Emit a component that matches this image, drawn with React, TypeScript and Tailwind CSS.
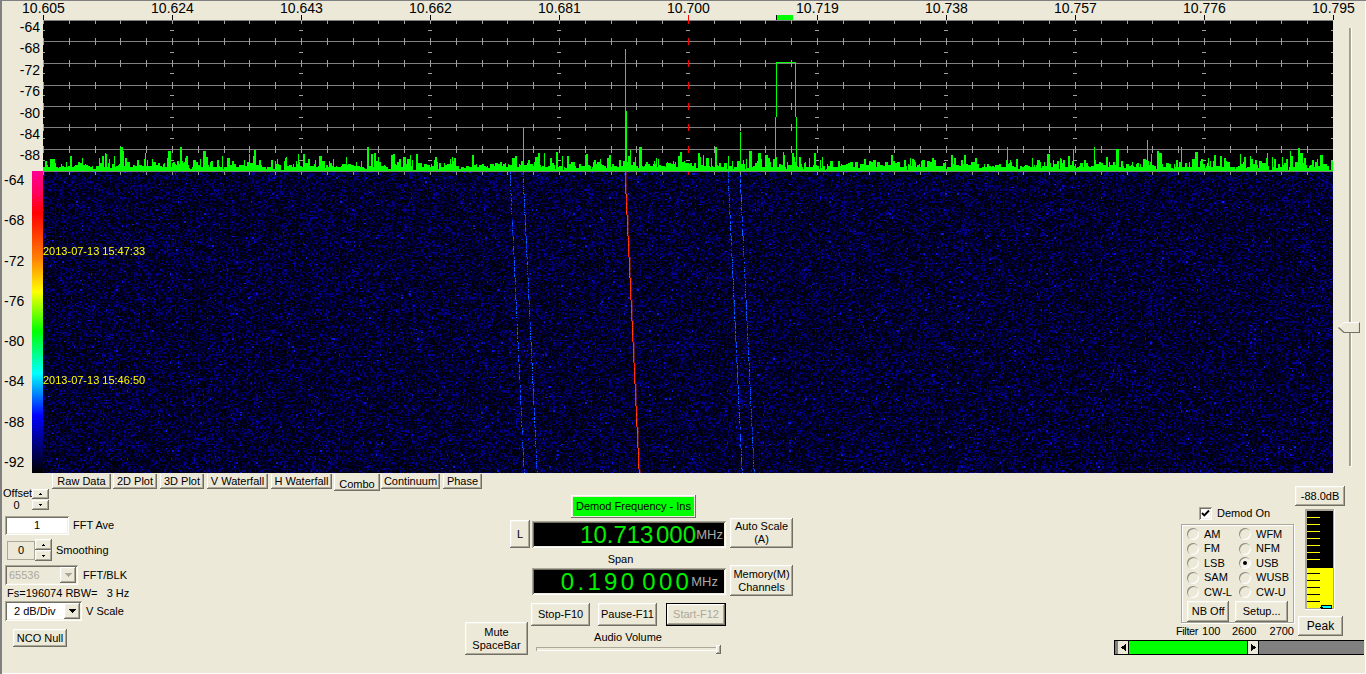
import React, { useEffect, useRef } from "react";

const RAISED =
  "bg-[#ece9d8] shadow-[inset_-1px_-1px_0_#716f64,inset_1px_1px_0_#ffffff,inset_-2px_-2px_0_#aca899,inset_2px_2px_0_#f1efe2]";
const SUNKEN =
  "shadow-[inset_1px_1px_0_#aca899,inset_-1px_-1px_0_#ffffff,inset_2px_2px_0_#716f64,inset_-2px_-2px_0_#f1efe2]";

function rng(seed: number) {
  let a = seed;
  return () => {
    a |= 0;
    a = (a + 0x6d2b79f5) | 0;
    let t = Math.imul(a ^ (a >>> 15), 1 | a);
    t = (t + Math.imul(t ^ (t >>> 7), 61 | t)) ^ t;
    return ((t ^ (t >>> 14)) >>> 0) / 4294967296;
  };
}

const PW = 1290;
const PH = 152;
const base = 151;

function spectrumPath() {
  const r = rng(4242);
  let d = "";
  let x = 0;
  while (x < PW) {
    const w = r() < 0.45 ? 1 : r() < 0.75 ? 2 : 3;
    let h = 3.5 - Math.log(r() + 0.001) * 5.2;
    if (r() < 0.1) h = 1 + r() * 3;
    h = Math.round(Math.min(24, h));
    d += `M${x} ${base - h}h${w}V${base}h-${w}z`;
    x += w;
  }
  return d;
}
const SPECTRUM = spectrumPath();
const vXs = Array.from({ length: 51 }, (_, i) => Math.round(i * 25.8));
const hYs = [21, 43, 65, 86, 107, 129];
const dashYs = [10, 32, 53, 75, 97, 118, 140];

function Spectrum() {
  return (
    <svg width={PW} height={PH} viewBox={`0 0 ${PW} ${PH}`} shapeRendering="crispEdges" className="block bg-black">
      <rect x="0" y="0" width={PW} height="1" fill="#808080" />
      {hYs.map((y) => (
        <rect key={y} x="0" y={y} width={PW} height="1" fill="#808080" />
      ))}
      {vXs.map((x) => (
        <g key={x}>
          <rect x={x} y="0" width="1" height="4" fill={x === 645 ? "#ff0000" : "#a0a0a0"} />
          {hYs.map((y) => (
            <rect key={y} x={x} y={y - 3} width="1" height="7" fill={x === 645 ? "#ff0000" : "#a0a0a0"} />
          ))}
        </g>
      ))}
      {vXs
        .filter((_, i) => i % 5 === 0)
        .map((x) =>
          dashYs.map((y) => <rect key={`${x}-${y}`} x={x - 2} y={y} width="4" height="1" fill="#a0a0a0" />)
        )}
      <path d={SPECTRUM} fill="#00ff00" />
      <g fill="#00ff00">
        <rect x="480" y="107" width="1" height="44" />
        <rect x="582" y="29" width="1" height="122" />
        <rect x="582" y="91" width="2" height="60" />
        <rect x="697" y="112" width="1" height="39" />
        <rect x="1104" y="120" width="1" height="31" />
        <rect x="732" y="97" width="1" height="54" />
        <rect x="733" y="42" width="1" height="55" />
        <rect x="733" y="42" width="20" height="1" />
        <rect x="752" y="42" width="1" height="55" />
        <rect x="753" y="97" width="1" height="54" />
      </g>
      <rect x="0" y="151" width={PW} height="1" fill="#808080" />
    </svg>
  );
}

const BLUE = ["#0a40f0", "#0070ff", "#0030c0"];
const RED = ["#ff3000", "#ff2000", "#ff5000"];
const traces = [
  { x0: 466.5, c: BLUE, dotted: true },
  { x0: 479.5, c: BLUE, dotted: true },
  { x0: 582.4, c: RED, dotted: false },
  { x0: 684.5, c: BLUE, dotted: true },
  { x0: 696.5, c: BLUE, dotted: true },
];

function Waterfall() {
  const ref = useRef<HTMLCanvasElement>(null);
  useEffect(() => {
    const cv = ref.current;
    if (!cv) return;
    const ctx = cv.getContext("2d");
    if (!ctx) return;
    const W = cv.width;
    const H = cv.height;
    const sw = 968;
    const sh = 226;
    const off = document.createElement("canvas");
    off.width = sw;
    off.height = sh;
    const octx = off.getContext("2d");
    if (!octx) return;
    const img = octx.createImageData(sw, sh);
    const r = rng(99);
    for (let i = 0; i < sw * sh; i++) {
      const v = r();
      let R = 0;
      let G = 0;
      let B = 0;
      if (v < 0.4) {
        B = Math.floor(r() * 30);
      } else if (v < 0.992) {
        const k = r();
        B = 35 + Math.floor(125 * k * k);
        R = Math.floor(B * 0.04);
      } else {
        B = 180 + Math.floor(r() * 60);
        R = 8;
        G = 8 + Math.floor(r() * 30);
      }
      img.data[i * 4] = R;
      img.data[i * 4 + 1] = G;
      img.data[i * 4 + 2] = B;
      img.data[i * 4 + 3] = 255;
    }
    octx.putImageData(img, 0, 0);
    ctx.imageSmoothingEnabled = false;
    ctx.drawImage(off, 0, 0, W, H);
    traces.forEach((t) => {
      for (let y = 0; y < H; y++) {
        const x = Math.round(t.x0 + Math.floor(y / 21.2));
        if (t.dotted && r() < 0.25) continue;
        ctx.fillStyle = t.c[Math.floor(r() * 3)];
        ctx.fillRect(x, y, 1, 1);
        if (!t.dotted) {
          ctx.globalAlpha = 0.35;
          ctx.fillRect(x + 1, y, 1, 1);
          ctx.globalAlpha = 1;
        }
      }
    });
    vXs.forEach((x) => {
      ctx.fillStyle = x === 645 ? "#ff0000" : "#909090";
      ctx.fillRect(x, 0, 1, 3);
    });
  }, []);
  return <canvas ref={ref} width={PW} height={301} className="block w-[1290px] h-[301px]" />;
}

function Btn({ children, className = "" }: { children: React.ReactNode; className?: string }) {
  return (
    <div className={`${RAISED} flex items-center justify-center text-center leading-[13px] ${className}`}>{children}</div>
  );
}

function Tri({ up = false, color = "#000", w = 5 }: { up?: boolean; color?: string; w?: number }) {
  const h = Math.ceil(w / 2);
  return (
    <svg width={w} height={h} viewBox={`0 0 ${w} ${h}`} shapeRendering="crispEdges">
      <path d={up ? `M${w / 2} 0L${w} ${h}H0z` : `M0 0H${w}L${w / 2} ${h}z`} fill={color} />
    </svg>
  );
}

function Spin({ top, bottom, w }: { top: string; bottom: string; w: string }) {
  return (
    <div className={`flex flex-col ${w}`}>
      <Btn className={top}>
        <Tri up w={3} />
      </Btn>
      <Btn className={bottom}>
        <Tri w={3} />
      </Btn>
    </div>
  );
}

const tabs = [
  { t: "Raw Data", c: "w-[59px] ml-[52px] h-[15px]" },
  { t: "2D Plot", c: "w-[44px] ml-[2px] h-[15px]" },
  { t: "3D Plot", c: "w-[44px] ml-[3px] h-[15px]" },
  { t: "V Waterfall", c: "w-[61px] ml-[3px] h-[15px]" },
  { t: "H Waterfall", c: "w-[61px] ml-[3px] h-[15px]" },
  { t: "Combo", c: "w-[46px] ml-[2px] h-[17px] pt-[3px]" },
  { t: "Continuum", c: "w-[59px] ml-[1px] h-[15px]" },
  { t: "Phase", c: "w-[39px] ml-[3px] h-[15px]" },
];

const xLabels = ["10.605", "10.624", "10.643", "10.662", "10.681", "10.700", "10.719", "10.738", "10.757", "10.776", "10.795"];
const topDb = ["-64", "-68", "-72", "-76", "-80", "-84", "-88"];
const wfDb = ["-64", "-68", "-72", "-76", "-80", "-84", "-88", "-92"];

const modes = [
  ["AM", "WFM"],
  ["FM", "NFM"],
  ["LSB", "USB"],
  ["SAM", "WUSB"],
  ["CW-L", "CW-U"],
];

function Radio({ label, on }: { label: string; on?: boolean }) {
  return (
    <div className="flex items-center h-[14.5px]">
      <div
        className={`w-[12px] h-[12px] rounded-full bg-[#ece9d8] flex items-center justify-center shadow-[inset_1px_1px_0_#8f8d7f,inset_-1px_-1px_0_#ffffff] ${
          on ? "bg-[#f4f2e8]" : ""
        }`}
      >
        {on && <div className="w-[4px] h-[4px] rounded-full bg-black" />}
      </div>
      <span className="ml-[5px]">{label}</span>
    </div>
  );
}

function Meter() {
  const yellow = [8, 15, 22, 29, 36, 43, 50];
  const black = [64, 71, 78, 85, 92];
  return (
    <svg width="30" height="101" viewBox="0 0 30 101" shapeRendering="crispEdges" className="block">
      <rect width="30" height="101" fill="#ffffff" />
      <rect x="0" y="0" width="29" height="100" fill="#aca899" />
      <rect x="2" y="2" width="26" height="97" fill="#000000" />
      <rect x="2" y="59" width="26" height="40" fill="#ffff00" />
      {yellow.map((y) => (
        <rect key={y} x="2" y={y} width="13" height="1" fill="#ffff00" />
      ))}
      {black.map((y) => (
        <rect key={y} x="2" y={y} width="13" height="1" fill="#000000" />
      ))}
      <rect x="16" y="96" width="10" height="3" fill="#00ffff" stroke="#000" strokeWidth="1" />
      <path d="M15 98h3v1h-3z" fill="#000" />
    </svg>
  );
}

export default function App() {
  return (
    <div className="w-[1366px] h-[674px] bg-[#ece9d8] overflow-hidden relative text-[11px] leading-[13px] text-black font-['Liberation_Sans',Arial,sans-serif] shadow-[inset_2px_1px_0_#808080,inset_-1px_-1px_0_#ffffff]">
      {/* top: plots and right slider */}
      <div className="flex h-[473px]">
        <div className="w-[1333px] flex flex-col shrink-0">
          <div className="h-[20px] relative">
            <div className="w-[1419px] -ml-[21px] grid grid-cols-[repeat(11,129px)] text-[14px] leading-[15px] h-[20px]">
              {xLabels.map((l) => (
                <div key={l} className="flex flex-col items-center w-[129px]">
                  <span className="mt-[1px] h-[14px]">{l}</span>
                  <span className={`w-px h-[5px] ${l === "10.700" ? "bg-[#ff0000]" : "bg-black"}`} />
                </div>
              ))}
            </div>
            <div className="absolute left-[776px] top-[15px] w-[17px] h-[5px] bg-[#00ff00] border-l border-black" />
          </div>
          <div className="flex h-[152px]">
            <div className="w-[43px] shrink-0 flex flex-col items-end pr-[3px] -mt-[3px] text-[14px] leading-[21.4px]">
              {topDb.map((d) => (
                <span key={d} className="h-[21.4px] shrink-0">
                  {d}
                </span>
              ))}
            </div>
            <Spectrum />
          </div>
          <div className="flex h-[301px]">
            <div className="w-[32px] shrink-0 flex flex-col items-start pl-[4px] -mt-[2px] text-[14px] leading-[20px]">
              {wfDb.map((d) => (
                <span key={d} className="h-[40.3px] shrink-0 flex items-start">
                  {d}
                </span>
              ))}
            </div>
            <div className="w-[11px] h-[302px] -mt-[1px] shrink-0 bg-[linear-gradient(to_bottom,#ff0090_0%,#ff0060_7%,#ff0000_14%,#ff8000_29%,#ffff00_40%,#00ff00_53%,#00ffff_67%,#0000ff_81%,#000000_100%)]" />
            <div className="relative w-[1290px] h-[301px]">
              <Waterfall />
              <span className="absolute left-0 top-[73px] text-[#ffff00]">2013-07-13 15:47:33</span>
              <span className="absolute left-0 top-[202px] text-[#ffff00]">2013-07-13 15:46:50</span>
            </div>
          </div>
        </div>
        <div className="relative flex-1">
          <div className="absolute left-[16px] top-[28px] w-[2px] h-[438px] border-l border-[#9d9b8c] bg-[#aca899] shadow-[1px_0_0_#ffffff,1px_1px_0_#ffffff]" />
          <svg className="absolute left-[5px] top-[322px]" width="22" height="11" viewBox="0 0 22 11" shapeRendering="geometricPrecision">
            <path d="M0.5 5.5L6 0.5H21.5V10.5H6z" fill="#ece9d8" stroke="#ffffff" strokeWidth="1" />
            <path d="M21.5 0.5V10.5H6L0.5 5.5" fill="none" stroke="#716f64" strokeWidth="1.2" />
          </svg>
        </div>
      </div>

      {/* tabs */}
      <div className="flex items-start h-[16px] pt-[1px]">
        {tabs.map((t) => (
          <div
            key={t.t}
            className={`flex items-center justify-center shrink-0 bg-[#ece9d8] shadow-[inset_-1px_-1px_0_#716f64,inset_1px_0_0_#ffffff,inset_-2px_-2px_0_#aca899] ${t.c}`}
          >
            {t.t}
          </div>
        ))}
      </div>

      {/* controls */}
      <div className="flex h-[185px]">
        {/* left column */}
        <div className="w-[465px] shrink-0 flex flex-col">
          <div className="flex -mt-[3px] h-[24px] relative">
            <div className="ml-[3px] w-[27px] text-center flex flex-col pt-0">
              <span className="h-[14px] leading-[13px] mt-[1px]">Offset</span>
              <span className="leading-[12px] mt-[-1px]">0</span>
            </div>
            <div className="ml-[2px] mt-[3px]">
              <Spin w="w-[17px]" top="h-[10px] mb-[1px]" bottom="h-[10px]" />
            </div>
          </div>
          <div className="flex items-center mt-[6px] ml-[5px] h-[19px]">
            <div className={`w-[64px] h-[19px] bg-white flex items-center justify-center ${SUNKEN}`}>1</div>
            <span className="ml-[4px]">FFT Ave</span>
          </div>
          <div className="flex items-center mt-[4px] ml-[7px] h-[22px]">
            <div className="w-[28px] h-[19px] border border-[#aca899] flex items-center justify-center">0</div>
            <Spin w="w-[17px]" top="h-[11px]" bottom="h-[11px]" />
            <span className="ml-[4px]">Smoothing</span>
          </div>
          <div className="flex items-center mt-[4px] ml-[5px] h-[20px]">
            <div className={`w-[73px] h-[20px] flex items-center justify-between pl-[4px] pr-[2px] text-[#aca899] ${SUNKEN}`}>
              <span>65536</span>
              <Btn className="w-[16px] h-[16px]">
                <Tri color="#aca899" w={7} />
              </Btn>
            </div>
            <span className="ml-[5px]">FFT/BLK</span>
          </div>
          <div className="mt-[2px] ml-[7px] h-[13px] whitespace-pre">Fs=196074 RBW=   3 Hz</div>
          <div className="flex items-center mt-[1px] ml-[5px] h-[20px]">
            <div className={`w-[77px] h-[20px] bg-white flex items-center justify-between pl-[9px] pr-[2px] ${SUNKEN}`}>
              <span>2 dB/Div</span>
              <Btn className="w-[16px] h-[16px]">
                <Tri w={7} />
              </Btn>
            </div>
            <span className="ml-[4px]">V Scale</span>
          </div>
          <Btn className="mt-[8px] ml-[13px] w-[54px] h-[18px]">NCO Null</Btn>
        </div>

        {/* centre column */}
        <div className="w-[329px] shrink-0 flex flex-col pt-[6px]">
          <div className="ml-[106px] w-[125px] h-[23px] bg-[#00ff00] flex items-center justify-center shadow-[inset_-1px_-1px_0_#716f64,inset_1px_1px_0_#ffffff,inset_-2px_-2px_0_#ece9d8,inset_2px_2px_0_#ece9d8]">
            Demod Frequency - Ins
          </div>
          <div className="flex items-start h-[30px]">
            <Btn className="ml-[45px] w-[20px] h-[28px] mt-[2px]">L</Btn>
            <div className={`ml-[2px] mt-[3px] w-[194px] h-[27px] bg-black flex items-center justify-end pr-[3px] ${SUNKEN}`}>
              <span className="text-[24px] leading-[27px] text-[#00f000] whitespace-pre">10.713<span className="ml-[2.5px]">000</span></span>
              <span className="text-[13px] text-[#a8a8a8] w-[27px] text-right">MHz</span>
            </div>
            <Btn className="ml-[4px] w-[63px] h-[30px]">
              Auto Scale
              <br />
              (A)
            </Btn>
          </div>
          <div className="h-[17px] flex items-center justify-center ml-[-8px] mt-[0px] pt-[5px]">
            <span className="relative left-[-5px]">Span</span>
          </div>
          <div className="flex items-start h-[31px]">
            <div className={`ml-[67px] w-[194px] h-[27px] mt-[3px] bg-black flex items-center justify-end pr-[8px] ${SUNKEN}`}>
              <span className="text-[24px] leading-[27px] text-[#00f000] tracking-[3.3px] whitespace-pre">0.190<span className="ml-[5px]">000</span></span>
              <span className="text-[13px] text-[#a8a8a8] ml-[-1px]">MHz</span>
            </div>
            <Btn className="ml-[4px] w-[63px] h-[31px]">
              Memory(M)
              <br />
              Channels
            </Btn>
          </div>
          <div className="flex items-end mt-[7px]">
            <Btn className="w-[63px] h-[33px] mb-[-1px]">
              Mute
              <br />
              SpaceBar
            </Btn>
            <div className="ml-[3px] w-[195px] flex flex-col">
              <div className="flex justify-between">
                <Btn className="w-[59px] h-[23px]">Stop-F10</Btn>
                <Btn className="w-[59px] h-[23px] ml-[8px]">Pause-F11</Btn>
                <div className="w-[60px] h-[23px] ml-[9px] border border-black">
                  <Btn className="w-full h-full text-[#aca899]">Start-F12</Btn>
                </div>
              </div>
              <div className="text-center mt-[5px] h-[14px] pr-[1px]">Audio Volume</div>
              <div className="relative h-[9px] ml-[5px] w-[185px]">
                <div className="absolute left-0 right-0 top-[2px] h-[4px] bg-[#ece9d8] shadow-[inset_1px_1px_0_#aca899,inset_-1px_-1px_0_#ffffff]" />
                <div className={`absolute right-0 top-0 w-[5px] h-[9px] ${RAISED}`} />
              </div>
            </div>
          </div>
        </div>

        {/* right column */}
        <div className="ml-auto w-[252px] shrink-0 flex flex-col">
          <div className="flex h-[151px]">
            <div className="ml-[67px] w-[113px] shrink-0 flex flex-col pt-[18px]">
              <div className="flex items-center h-[13px] ml-[18px]">
                <div className={`w-[13px] h-[13px] bg-white flex items-center justify-center ${SUNKEN}`}>
                  <svg width="9" height="9" viewBox="0 0 9 9">
                    <path d="M1 4l2.3 2.4L8 1.5" fill="none" stroke="#000" strokeWidth="1.9" />
                  </svg>
                </div>
                <span className="ml-[5px]">Demod On</span>
              </div>
              <div className="mt-[4px] h-[99px] border border-[#aca899] shadow-[1px_1px_0_#ffffff,inset_1px_1px_0_#ffffff] px-[5px] pt-[2px] flex flex-col">
                <div className="flex flex-col">
                  {modes.map(([a, b]) => (
                    <div key={a} className="grid grid-cols-[52px_1fr]">
                      <Radio label={a} />
                      <Radio label={b} on={b === "USB"} />
                    </div>
                  ))}
                </div>
                <div className="flex mt-[1px]">
                  <Btn className="w-[45px] h-[21px]">NB Off</Btn>
                  <Btn className="w-[56px] h-[21px] ml-[6px]">Setup...</Btn>
                </div>
              </div>
              <div className="mt-[2px] -ml-[5px] flex whitespace-pre">
                <span className="w-[27px] tracking-[-0.4px]">Filter</span>
                <span className="w-[31px]">100</span>
                <span className="w-[39px]">2600</span>
                <span>2700</span>
              </div>
            </div>
            <div className="ml-[1px] w-[50px] flex flex-col items-start -mt-[3px]">
              <Btn className="w-[50px] h-[20px]">-88.0dB</Btn>
              <div className="mt-[3px] ml-[10px]">
                <Meter />
              </div>
              <Btn className="mt-[6px] ml-[3px] w-[45px] h-[20px] text-[12px]">Peak</Btn>
            </div>
          </div>
          <div className="flex items-stretch h-[15px] border-y border-black bg-[#808080] w-[250px]">
            <div className="w-[1px] bg-black" />
            <div className="w-[3px]" />
            <div className="w-[10px] bg-[#ece9d8] flex items-center justify-center">
              <svg width="5" height="7" viewBox="0 0 5 7" shapeRendering="crispEdges"><path d="M5 0V7L0 3.5z" fill="#000" /></svg>
            </div>
            <div className="w-[1px] bg-black" />
            <div className="w-[118px] bg-[#00ff00]" />
            <div className="w-[1px] bg-black" />
            <div className="w-[10px] bg-[#ece9d8] flex items-center justify-center">
              <svg width="5" height="7" viewBox="0 0 5 7" shapeRendering="crispEdges"><path d="M0 0V7L5 3.5z" fill="#000" /></svg>
            </div>
            <div className="w-[1px] bg-black" />
          </div>
        </div>
      </div>
    </div>
  );
}
